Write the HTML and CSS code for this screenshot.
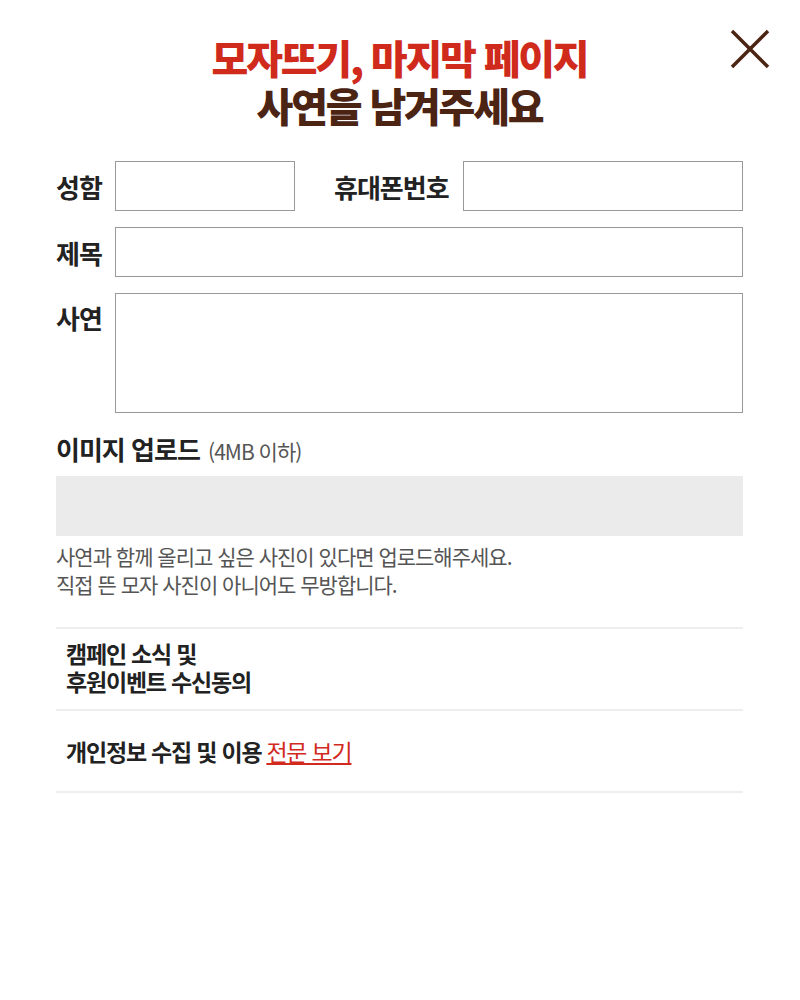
FILE: index.html
```html
<!DOCTYPE html>
<html lang="ko">

<head>
    <meta charset="UTF-8">
    <meta name="viewport" content="width=device-width, initial-scale=1.0">
    <title>모자뜨기 사연 남기기</title>
    <link rel="stylesheet" href="styles.css">
</head>

<body>
    <div class="popup">
        <a class="close" href="#">
            <svg width="40" height="40" viewBox="0 0 40 40">
                <path d="M2 2 L38 38 M38 2 L2 38" stroke="#4b2414" stroke-width="3.5" fill="none" />
            </svg>
        </a>

        <h1 class="title">
            <span class="title-red">모자뜨기, 마지막 페이지</span>
            <span class="title-brown">사연을 남겨주세요</span>
        </h1>

        <div class="form">
            <div class="row">
                <label class="label">성함</label>
                <input type="text" class="field field-name">
                <label class="label label-phone">휴대폰번호</label>
                <input type="text" class="field field-grow">
            </div>
            <div class="row">
                <label class="label">제목</label>
                <input type="text" class="field field-grow">
            </div>
            <div class="row row-top">
                <label class="label">사연</label>
                <textarea class="field field-grow area"></textarea>
            </div>

            <div class="upload">
                <h2 class="upload-title">이미지 업로드 <small>(4MB 이하)</small></h2>
                <div class="upload-box"></div>
                <p class="upload-help">사연과 함께 올리고 싶은 사진이 있다면 업로드해주세요.<br>직접 뜬 모자 사진이 아니어도 무방합니다.</p>
            </div>

            <div class="agree">
                <div class="agree-item">캠페인 소식 및<br>후원이벤트 수신동의</div>
                <div class="agree-item agree-single">개인정보 수집 및 이용 <a href="#">전문 보기</a></div>
            </div>
        </div>
    </div>
</body>

</html>
```

FILE: styles.css
```css
body {
    margin: 0;
    padding: 0;
    background-color: #fff;
    font-family: "Noto Sans CJK KR", "Noto Sans", sans-serif;
    color: #222;
}

.popup {
    position: relative;
    width: 687px;
    padding: 33px 57px 0 56px;
}

.close {
    position: absolute;
    top: 29px;
    right: 30px;
    display: block;
    width: 40px;
    height: 40px;
}

.title {
    margin: 0;
    text-align: center;
    font-size: 40px;
    font-weight: 900;
    line-height: 48px;
    letter-spacing: -2.2px;
}

.title span {
    display: block;
}

.title-red {
    color: #cf2a1c;
}

.title-brown {
    color: #4b2414;
}

.form {
    margin-top: 32px;
}

.row {
    display: flex;
    align-items: center;
    margin-bottom: 16px;
}

.row-top {
    align-items: flex-start;
}

.row-top .label {
    margin-top: 6px;
}

.label {
    width: 59px;
    flex-shrink: 0;
    font-size: 26px;
    font-weight: 700;
    letter-spacing: -1px;
    color: #222;
}

.label-phone {
    width: auto;
    margin-left: 39px;
    margin-right: 14px;
}

.field {
    box-sizing: border-box;
    height: 50px;
    border: 1px solid #999;
    margin: 0;
    padding: 0 10px;
    font-size: 18px;
    background: #fff;
    border-radius: 0;
}

.field-name {
    width: 180px;
}

.field-grow {
    flex: 1;
}

.area {
    height: 120px;
    resize: none;
    font-family: inherit;
}

.upload {
    margin-top: 8px;
}

.upload-title {
    margin: 0;
    font-size: 26px;
    font-weight: 700;
    letter-spacing: -1px;
    line-height: 40px;
    color: #222;
}

.upload-title small {
    font-size: 21px;
    font-weight: 400;
    color: #555;
    letter-spacing: -1px;
    margin-left: 2px;
}

.upload-box {
    height: 60px;
    margin-top: 5px;
    background-color: #ebebeb;
}

.upload-help {
    margin: 6px 0 0;
    font-size: 21px;
    line-height: 28px;
    letter-spacing: -1px;
    color: #555;
}

.agree {
    margin-top: 29px;
    border-top: 2px solid #eee;
}

.agree-item {
    box-sizing: border-box;
    height: 82px;
    padding: 10px 10px 0;
    border-bottom: 2px solid #eee;
    font-size: 23px;
    font-weight: 700;
    line-height: 28px;
    letter-spacing: -1.2px;
    color: #222;
}

.agree-single {
    display: flex;
    align-items: center;
    padding-top: 0;
}

.agree-single a {
    margin-left: 5px;
    color: #d22a1f;
    font-weight: 400;
    text-decoration: underline;
}
```
